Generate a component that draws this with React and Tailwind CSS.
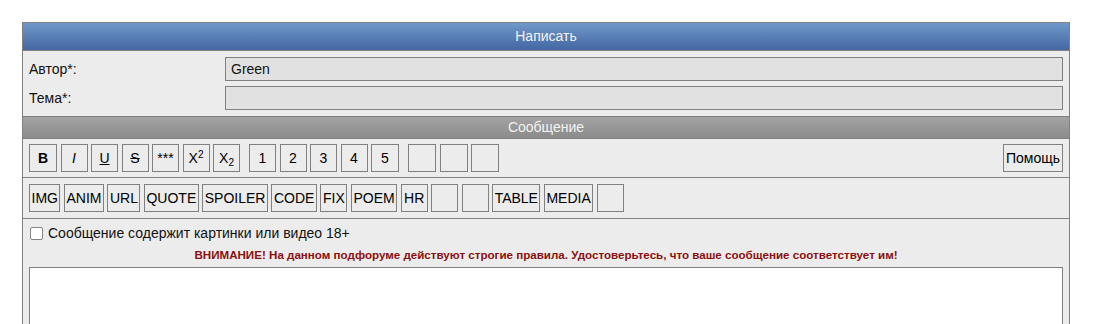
import React from 'react';

const Btn = ({ children, className = '' }) => (
  <button
    type="button"
    className={`h-[28px] min-w-[27px] border border-[#808080] bg-[#ececec] text-[14px] leading-none text-black ${className}`}
  >
    {children}
  </button>
);

const App = () => {
  const row2 = ['IMG', 'ANIM', 'URL', 'QUOTE', 'SPOILER', 'CODE', 'FIX', 'POEM', 'HR', '', '', 'TABLE', 'MEDIA', ''];

  return (
    <div className="min-h-screen bg-white pt-[22px] pl-[22px]" style={{ fontFamily: '"Liberation Sans", Arial, sans-serif' }}>
      <div className="w-[1048px] border border-[#808080] bg-[#ececec]">
        {/* header */}
        <div className="h-[28px] border-b border-[#808080] bg-gradient-to-b from-[#7098c8] to-[#4467a3] flex items-center justify-center text-[14px] text-[#f4f4f4]">
          Написать
        </div>

        {/* author / topic */}
        <div className="px-[6px] pt-[6px] pb-[6px] flex flex-col gap-[5px]">
          <div className="flex items-center">
            <label className="w-[196px] text-[14px] text-[#111]">Автор*:</label>
            <div className="flex-1 h-[24px] border border-[#808080] bg-[#e1e1e1] px-[5px] flex items-center text-[14px] text-[#111]">
              Green
            </div>
          </div>
          <div className="flex items-center">
            <label className="w-[196px] text-[14px] text-[#111]">Тема*:</label>
            <div className="flex-1 h-[24px] border border-[#808080] bg-[#e1e1e1]" />
          </div>
        </div>

        {/* message bar */}
        <div className="h-[23px] border-y border-[#808080] bg-gradient-to-b from-[#a3a3a3] to-[#8b8b8b] flex items-center justify-center text-[14px] text-[#f2f2f2]">
          Сообщение
        </div>

        {/* toolbar row 1 */}
        <div className="px-[6px] pt-[5px] pb-[5px] border-b border-[#808080] flex items-center">
          <div className="flex items-center gap-[3.5px]">
            <Btn className="w-[28px] font-bold">B</Btn>
            <Btn className="w-[27px] italic">I</Btn>
            <Btn className="w-[27px] underline">U</Btn>
            <Btn className="w-[27px] line-through">S</Btn>
            <Btn className="w-[27px] text-[11px]">***</Btn>
            <Btn className="w-[27px]">
              X<sup className="text-[10px]">2</sup>
            </Btn>
            <Btn className="w-[27px]">
              X<sub className="text-[10px]">2</sub>
            </Btn>
            <div className="w-[2px]" />
            <Btn className="w-[27px]">1</Btn>
            <Btn className="w-[27px]">2</Btn>
            <Btn className="w-[27px]">3</Btn>
            <Btn className="w-[27px]">4</Btn>
            <Btn className="w-[28px]">5</Btn>
            <div className="w-[2px]" />
            <Btn className="w-[28px]" />
            <Btn className="w-[28px]" />
            <Btn className="w-[28px]" />
          </div>
          <Btn className="ml-auto px-[2px]">Помощь</Btn>
        </div>

        {/* toolbar row 2 */}
        <div className="px-[6px] pt-[6px] pb-[6px] border-b border-[#808080] flex items-center gap-[3.5px]">
          {row2.map((t, i) => (
            <Btn key={i} className="px-[1.5px]">{t}</Btn>
          ))}
        </div>

        {/* options */}
        <div className="px-[6px] pt-[6px]">
          <label className="flex items-center gap-[5px] text-[14px] leading-[16px] text-[#111]">
            <span className="ml-[1px] w-[13px] h-[13px] rounded-[2px] border-[1.5px] border-[#858585] bg-white" />
            Сообщение содержит картинки или видео 18+
          </label>
          <div className="mt-[6px] text-center text-[11.6px] font-bold leading-[16px] text-[#8a1010]">
            ВНИМАНИЕ! На данном подфоруме действуют строгие правила. Удостоверьтесь, что ваше сообщение соответствует им!
          </div>
          <textarea className="mt-[4px] block w-full h-[120px] border border-[#808080] bg-white resize-none outline-none" />
        </div>
      </div>
    </div>
  );
};

export default App;
